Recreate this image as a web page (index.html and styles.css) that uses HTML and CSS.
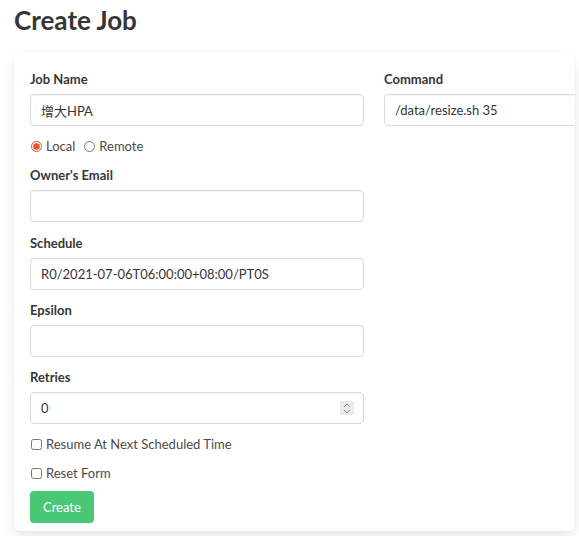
FILE: index.html
```html
<!DOCTYPE html>
<html lang="en">
<head>
<meta charset="utf-8">
<title>Create Job</title>
<link rel="stylesheet" href="styles.css">
</head>
<body>
<h1 class="title">Create Job</h1>
<form class="card">
  <div class="grid">
    <div class="col">
      <div class="field">
        <label class="label">Job Name</label>
        <input class="input" type="text" value="增大HPA">
      </div>
      <div class="radios">
        <label class="radio"><input type="radio" name="loc" checked> Local</label>
        <label class="radio"><input type="radio" name="loc"> Remote</label>
      </div>
      <div class="field">
        <label class="label">Owner's Email</label>
        <input class="input" type="text" value="">
      </div>
      <div class="field tight">
        <label class="label">Schedule</label>
        <input class="input" type="text" value="R0/2021-07-06T06:00:00+08:00/PT0S">
      </div>
      <div class="field tight">
        <label class="label">Epsilon</label>
        <input class="input" type="text" value="">
      </div>
      <div class="field tight">
        <label class="label">Retries</label>
        <div class="num">
          <input class="input" type="text" value="0">
          <span class="spin">
            <svg width="8" height="11" viewBox="0 0 8 11"><path d="M1 4 L4 1.2 L7 4" fill="none" stroke="#8a8a8a" stroke-width="1"/><path d="M1 7 L4 9.8 L7 7" fill="none" stroke="#8a8a8a" stroke-width="1"/></svg>
          </span>
        </div>
      </div>
      <label class="check"><input type="checkbox"> Resume At Next Scheduled Time</label>
      <label class="check"><input type="checkbox"> Reset Form</label>
      <button class="button" type="button">Create</button>
    </div>
    <div class="col">
      <div class="field">
        <label class="label">Command</label>
        <input class="input" type="text" value="/data/resize.sh 35">
      </div>
    </div>
  </div>
</form>
</body>
</html>
```
FILE: styles.css
```css
html, body {
  margin: 0;
  padding: 0;
  background: #ffffff;
}
body {
  font-family: "Lato", "Noto Sans", "Noto Sans CJK SC", sans-serif;
  font-size: 13px;
  color: #4a4a4a;
  padding: 0 4px 0 14px;
  overflow: hidden;
  height: 536px;
}
.title {
  margin: 0;
  padding-top: 5px;
  height: 52px;
  box-sizing: border-box;
  font-size: 26px;
  font-weight: 700;
  line-height: 30px;
  color: #363636;
}
.card {
  display: block;
  background: #fff;
  border-radius: 6px;
  box-shadow: 0 8px 16px -2px rgba(10,10,10,0.1), 0 0 0 1px rgba(10,10,10,0.02);
  padding: 18px 16px 8px;
  overflow: hidden;
}
.grid {
  display: grid;
  grid-template-columns: 334px 334px;
  gap: 20px;
}
.col {
  display: flex;
  flex-direction: column;
  align-items: flex-start;
}
.field {
  width: 100%;
  margin-bottom: 12px;
}
.field.tight {
  margin-bottom: 11px;
}
.label {
  display: block;
  font-weight: 700;
  color: #363636;
  line-height: 18px;
  margin-bottom: 6px;
}
.input {
  display: block;
  box-sizing: border-box;
  width: 100%;
  height: 32px;
  border: 1px solid #dbdbdb;
  border-radius: 4px;
  padding: 0 10px;
  font: inherit;
  font-size: 13px;
  color: #363636;
  background: #fff;
  box-shadow: inset 0 0.0625em 0.125em rgba(10,10,10,0.05);
}
.radios {
  display: flex;
  gap: 8px;
  height: 16px;
  align-items: center;
  margin: 0 0 12px;
}
.radio, .check {
  display: flex;
  align-items: center;
  gap: 4px;
  line-height: 18px;
  color: #4a4a4a;
}
.radio input, .check input {
  margin: 0 0 0 1px;
  width: 11px;
  height: 11px;
  accent-color: #f0522c;
}
.check {
  margin-top: 11px;
}
.field + .check {
  margin-top: 0;
}
.num {
  position: relative;
}
.spin {
  position: absolute;
  right: 10px;
  top: 9px;
  width: 14px;
  height: 14px;
  background: #ececec;
  display: flex;
  align-items: center;
  justify-content: center;
}
.button {
  margin-top: 9px;
  height: 32px;
  padding: 0 13px;
  border: none;
  border-radius: 4px;
  background: #48c774;
  color: #fff;
  font: inherit;
  font-size: 13px;
}
```
